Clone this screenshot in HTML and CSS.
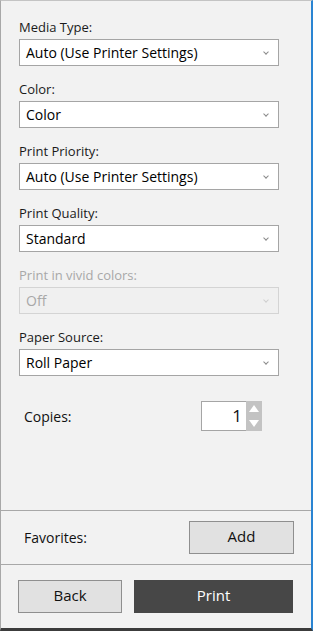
FILE: index.html
```html
<!DOCTYPE html>
<html lang="en">
<head>
    <meta charset="UTF-8">
    <title>Print Settings</title>
    <link rel="stylesheet" href="styles.css">
</head>
<body>
    <div class="window">
        <main class="settings">
            <div class="field">
                <label>Media Type:</label>
                <div class="select"><span>Auto (Use Printer Settings)</span><i class="chev"></i></div>
            </div>
            <div class="field">
                <label>Color:</label>
                <div class="select"><span>Color</span><i class="chev"></i></div>
            </div>
            <div class="field">
                <label>Print Priority:</label>
                <div class="select"><span>Auto (Use Printer Settings)</span><i class="chev"></i></div>
            </div>
            <div class="field">
                <label>Print Quality:</label>
                <div class="select"><span>Standard</span><i class="chev"></i></div>
            </div>
            <div class="field disabled">
                <label>Print in vivid colors:</label>
                <div class="select"><span>Off</span><i class="chev"></i></div>
            </div>
            <div class="field">
                <label>Paper Source:</label>
                <div class="select"><span>Roll Paper</span><i class="chev"></i></div>
            </div>

            <div class="copies">
                <span class="copies-label">Copies:</span>
                <div class="spinner">
                    <div class="spin-value">1</div>
                    <div class="spin-arrows">
                        <svg width="16" height="15" viewBox="0 0 16 15"><path d="M3 11 L8 4 L13 11 Z" fill="#fff"/></svg>
                        <svg width="16" height="15" viewBox="0 0 16 15"><path d="M3 4 L8 11 L13 4 Z" fill="#fff"/></svg>
                    </div>
                </div>
            </div>
        </main>

        <section class="favorites">
            <span>Favorites:</span>
            <button class="btn">Add</button>
        </section>

        <footer class="actions">
            <button class="btn back">Back</button>
            <button class="btn print">Print</button>
        </footer>
    </div>
</body>
</html>
```

FILE: styles.css
```css
html, body {
    margin: 0;
    padding: 0;
    background: #f2f2f2;
    font-family: "Open Sans", "Noto Sans", sans-serif;
}
.window {
    box-sizing: border-box;
    width: 313px;
    height: 631px;
    display: flex;
    flex-direction: column;
    background: #f2f2f2;
    border-top: 1px solid #c4c4c4;
    border-left: 1px solid #a8a8a8;
    border-right: 2px solid #2a84d2;
    border-bottom: 3px solid #3c3c3c;
}
.settings {
    flex: 1;
    padding: 16px 32px 0 18px;
}
.field {
    margin-bottom: 13px;
}
.field label {
    display: block;
    font-size: 13px;
    line-height: 20px;
    color: #1a1a1a;
    margin-bottom: 2px;
}
.select {
    box-sizing: border-box;
    height: 27px;
    display: flex;
    align-items: center;
    justify-content: space-between;
    padding: 0 10px 0 6px;
    background: #fff;
    border: 1px solid #a5a5a5;
    font-size: 14px;
    color: #000;
}
.chev {
    width: 3px;
    height: 3px;
    border-right: 1px solid #8a8a8a;
    border-bottom: 1px solid #8a8a8a;
    transform: rotate(45deg);
    margin-top: -2px;
}
.disabled label {
    color: #a8a8a8;
}
.disabled .select {
    background: #f0f0f0;
    border-color: #d4d4d4;
    color: #a8a8a8;
}
.disabled .chev {
    border-color: #cfcfcf;
}
.copies {
    display: flex;
    align-items: center;
    margin-top: 25px;
    padding-left: 5px;
}
.copies-label {
    font-size: 14px;
    color: #111;
    width: 177px;
}
.spinner {
    display: flex;
    height: 30px;
}
.spin-value {
    box-sizing: border-box;
    width: 45px;
    height: 30px;
    background: #fff;
    border: 1px solid #a5a5a5;
    border-right: none;
    text-align: right;
    padding-right: 4px;
    font-size: 17px;
    line-height: 28px;
    color: #111;
}
.spin-arrows {
    width: 16px;
    background: #c3c3c3;
    display: flex;
    flex-direction: column;
}
.favorites {
    height: 53px;
    border-top: 1px solid #a8a8a8;
    display: flex;
    align-items: center;
    justify-content: space-between;
    padding: 0 17px 0 23px;
    font-size: 14px;
    color: #111;
}
.btn {
    box-sizing: border-box;
    height: 33px;
    width: 105px;
    background: #e1e1e1;
    border: 1px solid #8f8f8f;
    font-family: inherit;
    font-size: 15px;
    color: #111;
    padding: 0 0 3px;
    margin: 0;
}
.actions {
    border-top: 1px solid #a8a8a8;
    display: flex;
    gap: 12px;
    padding: 15px 18px 0 17px;
    flex: 0 0 48px;
}
.back {
    width: 104px;
}
.print {
    width: 159px;
    background: #474747;
    border-color: #474747;
    color: #fff;
}
```
